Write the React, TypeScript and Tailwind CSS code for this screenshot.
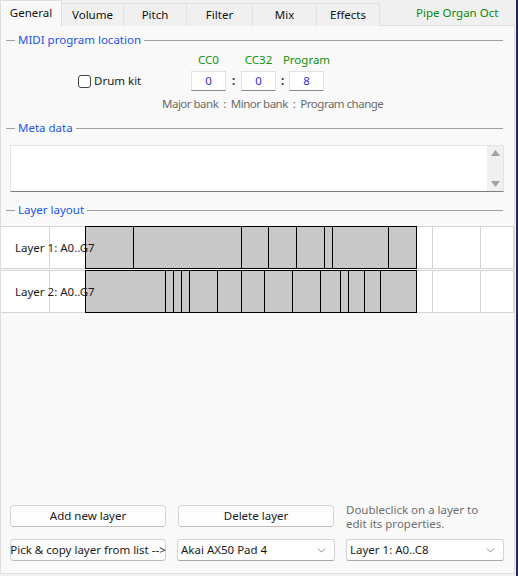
import { ChevronDown } from "lucide-react";

type Tab = { name: string; width: number };

const tabs: Tab[] = [
  { name: "Volume", width: 62 },
  { name: "Pitch", width: 63 },
  { name: "Filter", width: 66 },
  { name: "Mix", width: 64 },
  { name: "Effects", width: 63 },
];

// key range block boundaries in px, measured from the row's left edge
const layers = [
  { name: "Layer 1: A0..G7", cuts: [84, 132, 240, 267, 295, 323, 331, 387, 416] },
  { name: "Layer 2: A0..G7", cuts: [84, 164, 172, 180, 188, 216, 240, 263, 291, 319, 339, 347, 363, 379, 416] },
];

function GroupTitle({ title }: { title: string }) {
  return (
    <div className="flex h-[16px] items-center pl-[5px] pr-[11px]">
      <div className="h-px w-[9px] bg-[#a0a0a0]" />
      <span className="px-[3px] text-[#1a55e8]">{title}</span>
      <div className="h-px flex-1 bg-[#a0a0a0]" />
    </div>
  );
}

function NumberBox({ label, value }: { label: string; value: string }) {
  return (
    <div className="flex w-[35px] flex-col items-center">
      <div className="flex h-[16px] items-center text-[#119011]">{label}</div>
      <div className="mt-[3px] flex h-[20px] w-[35px] items-center justify-center border border-[#e2e2e2] border-b-[#8a8a8a] bg-white text-[#2f2fd6]">
        {value}
      </div>
    </div>
  );
}

function Colon({ w }: { w: string }) {
  return (
    <div className={`${w} flex flex-col items-center`}>
      <div className="h-[16px]" />
      <div className="mt-[3px] flex h-[20px] items-center font-bold text-[#333]">:</div>
    </div>
  );
}

function LayerRow({ name, cuts }: { name: string; cuts: number[] }) {
  const segs = cuts.slice(1).map((c, i) => c - cuts[i]);
  return (
    <div className="relative h-[43px] border-y border-[#d4d4d4] bg-white">
      <div className="flex h-full">
        <div className="w-[49px] border-r border-[#d4d4d4]" />
        <div className="w-[383px] border-r border-[#d4d4d4]" />
        <div className="w-[48px] border-r border-[#d4d4d4]" />
        <div className="w-[33px] border-r border-[#d4d4d4]" />
      </div>
      <div className="absolute -top-px left-[84px] flex h-[43px] w-[332px] border border-black bg-[#c8c8c8]">
        {segs.map((w, i) =>
          i < segs.length - 1 ? (
            <div key={i} className="h-full shrink-0 border-r border-black" style={{ width: w }} />
          ) : (
            <div key={i} className="h-full flex-1" />
          )
        )}
      </div>
      <div className="absolute left-[14px] top-0 flex h-full items-center text-[#1a1a1a]">{name}</div>
    </div>
  );
}

function Button({ children }: { children: React.ReactNode }) {
  return (
    <button className="flex h-[22px] w-[156px] items-center justify-center whitespace-nowrap rounded-[4px] border border-[#d3d3d3] border-b-[#bdbdbd] bg-[#fdfdfd] text-[#1a1a1a]">
      {children}
    </button>
  );
}

function Select({ value }: { value: string }) {
  return (
    <div className="flex h-[22px] flex-1 items-center justify-between rounded-[3px] border border-[#d3d3d3] border-b-[#a8a8a8] bg-white pl-[3px] pr-[6px] text-[#1a1a1a]">
      <span>{value}</span>
      <ChevronDown size={13} strokeWidth={1.3} className="text-[#555]" />
    </div>
  );
}

export default function App() {
  return (
    <div
      className="flex h-[576px] w-[518px] border-r-2 border-[#1f2b57] bg-[#f0f0f0] text-[11.5px] leading-[16px]"
      style={{ fontFamily: '"Segoe UI", "Noto Sans", sans-serif' }}
    >
      <div className="flex w-[516px] flex-col">
        {/* tab strip */}
        <div className="relative z-10 flex h-[26px] items-end">
          <div className="flex h-[26px] w-[62px] items-center justify-center border border-b-0 border-[#dedede] bg-[#f9f9f9] pb-[2px] text-[#111]">
            General
          </div>
          {tabs.map((t) => (
            <div
              key={t.name}
              className="flex h-[23px] items-center justify-center border-r border-t border-[#e2e2e2] bg-[#f0f0f0] text-[#111]"
              style={{ width: t.width }}
            >
              {t.name}
            </div>
          ))}
          <div className="flex h-[26px] flex-1 items-center pb-[1px] pl-[36px] text-[#0b8a0b]">Pipe Organ Oct</div>
        </div>

        {/* page */}
        <div className="-mt-px flex w-[515px] flex-1 flex-col border border-[#dedede] bg-[#f9f9f9] pt-[6px]">
          <GroupTitle title="MIDI program location" />
          <div className="mt-[4px] flex">
            <div className="w-[77px]" />
            <div className="flex w-[113px] flex-col">
              <div className="h-[16px]" />
              <label className="mt-[3px] flex h-[20px] items-center gap-[3px] text-[#1a1a1a]">
                <span className="h-[13px] w-[13px] rounded-[3px] border border-[#444] bg-white" />
                Drum kit
              </label>
            </div>
            <NumberBox label="CC0" value="0" />
            <Colon w="w-[15px]" />
            <NumberBox label="CC32" value="0" />
            <Colon w="w-[13px]" />
            <NumberBox label="Program" value="8" />
          </div>
          <div className="mt-[5px] whitespace-pre pl-[161px] tracking-[-0.5px] text-[#6b6b6b]">
            {"Major bank  :  Minor bank  :  Program change"}
          </div>

          <div className="mt-[8px]">
            <GroupTitle title="Meta data" />
          </div>
          <div className="ml-[9px] mt-[9px] flex h-[47px] w-[494px] border border-[#e4e4e4] border-b-[#7c7c7c] bg-white">
            <div className="flex-1" />
            <div className="flex w-[16px] flex-col items-center justify-between bg-[#f0f0f0] py-[4px]">
              <svg width="9" height="6" viewBox="0 0 9 6">
                <path d="M4.5 0 L9 6 L0 6 Z" fill="#a3a3a3" />
              </svg>
              <svg width="9" height="6" viewBox="0 0 9 6">
                <path d="M0 0 L9 0 L4.5 6 Z" fill="#a3a3a3" />
              </svg>
            </div>
          </div>

          <div className="mt-[10px]">
            <GroupTitle title="Layer layout" />
          </div>
          <div className="mt-[8px] flex flex-col gap-px">
            {layers.map((l) => (
              <LayerRow key={l.name} name={l.name} cuts={l.cuts} />
            ))}
          </div>

          {/* bottom controls */}
          <div className="mt-auto flex flex-col gap-[12px] pb-[12px] pl-[9px] pr-[10px]">
            <div className="flex h-[22px] items-start gap-[12px]">
              <Button>Add new layer</Button>
              <Button>Delete layer</Button>
              <div className="-mt-[2px] leading-[14px] text-[#6e6e6e]">
                Doubleclick on a layer to
                <br />
                edit its properties.
              </div>
            </div>
            <div className="flex gap-[11px]">
              <Button>Pick &amp; copy layer from list --&gt;</Button>
              <Select value="Akai AX50 Pad 4" />
              <Select value="Layer 1: A0..C8" />
            </div>
          </div>
        </div>
        <div className="h-[2px]" />
      </div>
    </div>
  );
}
